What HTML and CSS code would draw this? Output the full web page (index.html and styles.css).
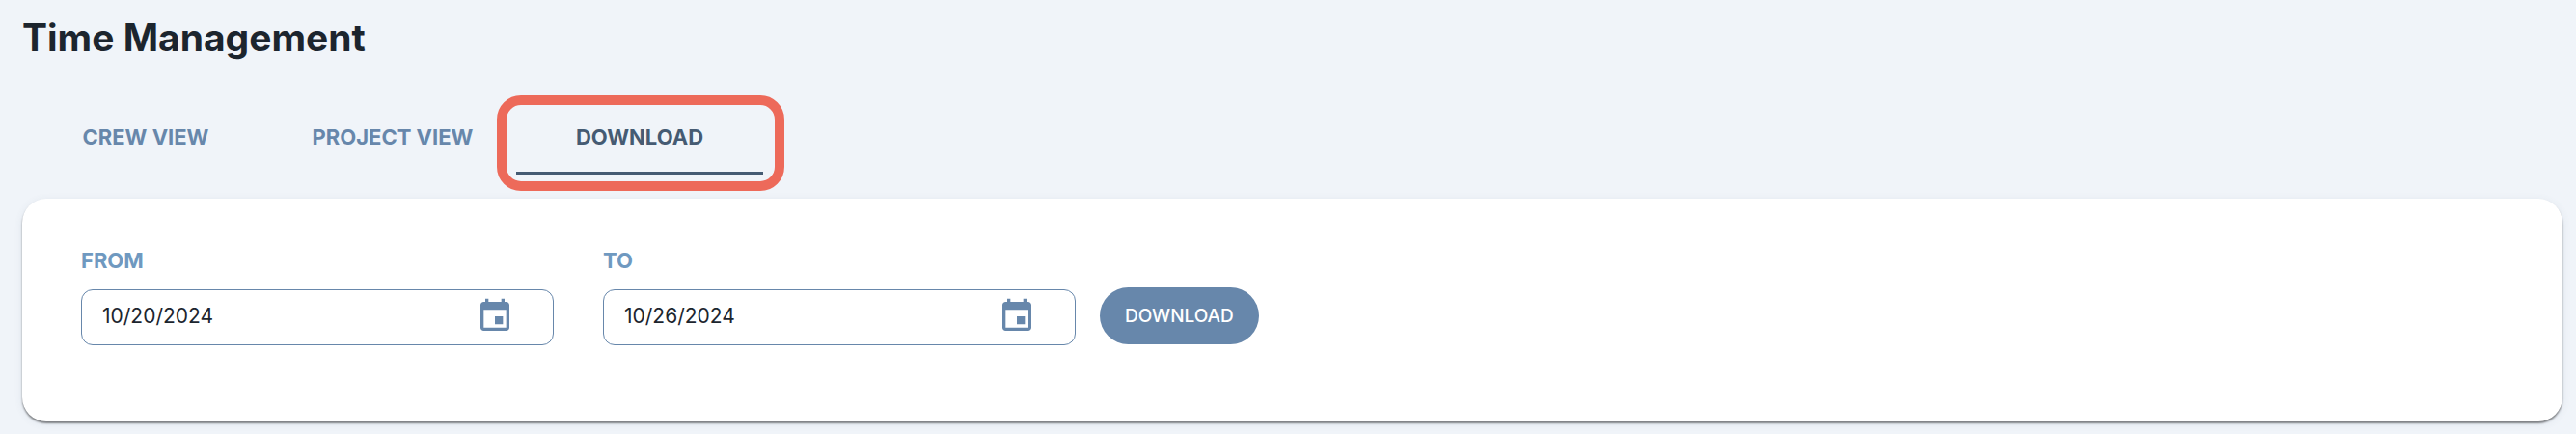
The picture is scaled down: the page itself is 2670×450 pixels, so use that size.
FILE: index.html
```html
<!DOCTYPE html>
<html lang="en">
<head>
    <meta charset="UTF-8">
    <meta name="viewport" content="width=device-width, initial-scale=1.0">
    <title>Time Management</title>
    <link rel="stylesheet" href="styles.css">
</head>
<body>

    <h1 class="page-title">Time Management</h1>

    <div class="tabs" role="tablist">
        <button class="tab" type="button" role="tab">CREW VIEW</button>
        <button class="tab" type="button" role="tab">PROJECT VIEW</button>
        <button class="tab active" type="button" role="tab" aria-selected="true">DOWNLOAD</button>
    </div>

    <form class="card">
        <div class="field">
            <label for="fromDate">FROM</label>
            <div class="date-box">
                <input type="text" id="fromDate" value="10/20/2024">
                <button class="calendar-btn" type="button" aria-label="Choose from date">
                    <svg viewBox="0 0 24 24"><path d="M17 12h-5v5h5v-5zM16 1v2H8V1H6v2H5c-1.11 0-1.99.9-1.99 2L3 19c0 1.1.89 2 2 2h14c1.1 0 2-.9 2-2V5c0-1.1-.9-2-2-2h-1V1h-2zm3 18H5V8h14v11z"/></svg>
                </button>
            </div>
        </div>

        <div class="field">
            <label for="toDate">TO</label>
            <div class="date-box">
                <input type="text" id="toDate" value="10/26/2024">
                <button class="calendar-btn" type="button" aria-label="Choose to date">
                    <svg viewBox="0 0 24 24"><path d="M17 12h-5v5h5v-5zM16 1v2H8V1H6v2H5c-1.11 0-1.99.9-1.99 2L3 19c0 1.1.89 2 2 2h14c1.1 0 2-.9 2-2V5c0-1.1-.9-2-2-2h-1V1h-2zm3 18H5V8h14v11z"/></svg>
                </button>
            </div>
        </div>

        <button class="download-btn" type="button">DOWNLOAD</button>
    </form>

</body>
</html>
```
FILE: styles.css
```css
* {
    box-sizing: border-box;
}

body {
    font-family: Inter, "Liberation Sans", sans-serif;
    background-color: #f0f4f9;
    color: #1c252e;
    margin: 0;
    padding: 15px 14px 12px 23px;
}

button,
input {
    font-family: inherit;
}

.page-title {
    margin: 0;
    font-size: 39px;
    line-height: 48px;
    font-weight: 700;
}

.tabs {
    display: flex;
    margin-top: 42px;
}

.tab {
    position: relative;
    width: 256px;
    height: 76px;
    padding: 0;
    border: none;
    border-bottom: 3px solid transparent;
    background: none;
    color: #6787ab;
    font-size: 22px;
    font-weight: 700;
    cursor: pointer;
}

.tab.active {
    color: #455b73;
    border-bottom-color: #455b73;
}

/* Highlight ring around the selected tab */
.tab.active::after {
    content: "";
    position: absolute;
    top: -6px;
    right: -22px;
    bottom: -20px;
    left: -20px;
    border: 10px solid #ed6a5a;
    border-radius: 25px;
    pointer-events: none;
}

.card {
    display: flex;
    align-items: flex-end;
    gap: 25px;
    margin-top: 25px;
    padding: 50px 61px 79px;
    background-color: #fff;
    border-radius: 25px;
    box-shadow: 0 2px 2px rgba(0, 0, 0, 0.45), 0 2px 8px rgba(69, 91, 115, 0.1);
}

.field {
    width: 490px;
}

.field:first-child {
    margin-right: 26px;
}

.field label {
    display: block;
    margin-bottom: 16px;
    color: #6f99c0;
    font-size: 22px;
    line-height: 28px;
    font-weight: 700;
}

.date-box {
    display: flex;
    align-items: center;
    height: 58px;
    padding: 0 40px 3px 21px;
    border: 1px solid #6787ab;
    border-radius: 12px;
}

.date-box input {
    flex: 1;
    min-width: 0;
    padding: 0;
    border: none;
    outline: none;
    background: none;
    color: #1c252e;
    font-size: 21px;
}

.calendar-btn {
    width: 40px;
    height: 40px;
    padding: 0;
    border: none;
    background: none;
    cursor: pointer;
}

.calendar-btn svg {
    display: block;
    width: 40px;
    height: 40px;
    fill: #6787ab;
}

.download-btn {
    height: 59px;
    margin-bottom: 1px;
    padding: 0 26px;
    border: none;
    border-radius: 30px;
    background-color: #6787ab;
    color: #fff;
    font-size: 19px;
    font-weight: 500;
    cursor: pointer;
}
```
